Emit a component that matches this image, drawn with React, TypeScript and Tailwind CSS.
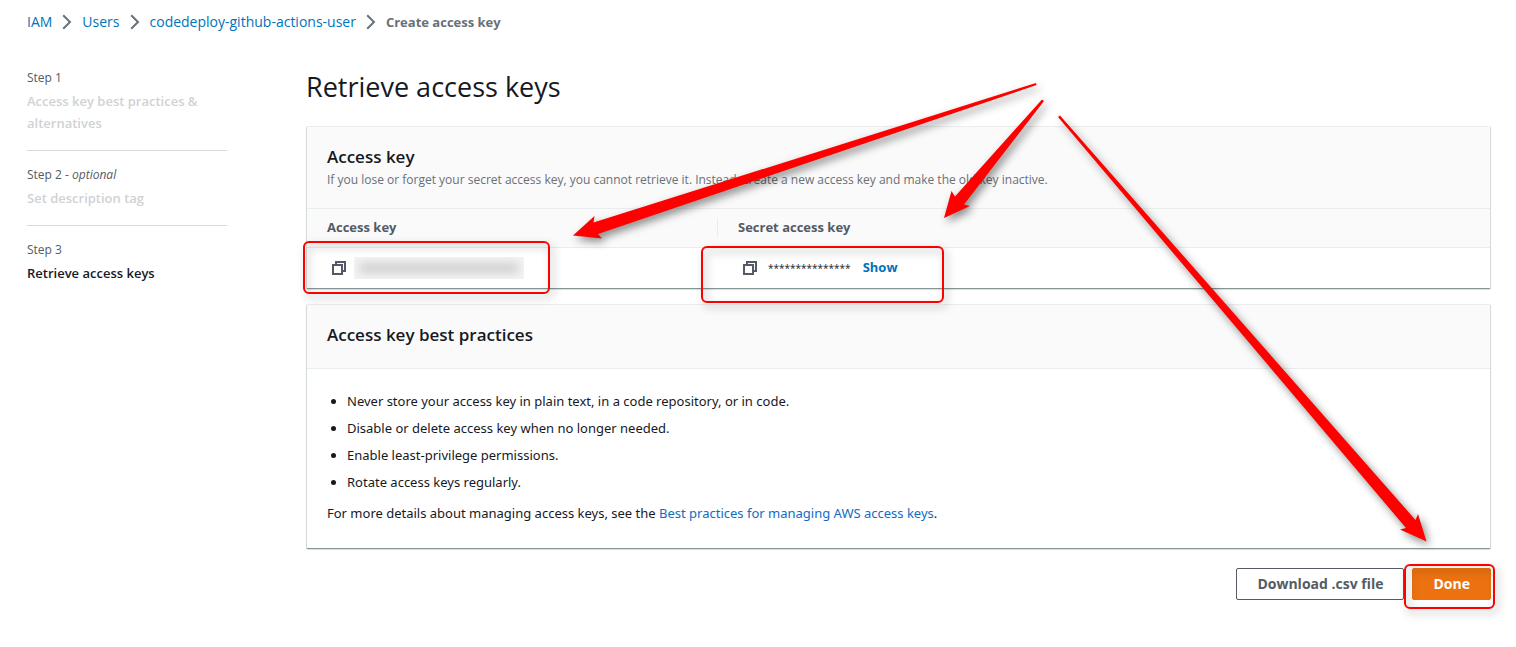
import React from "react";

const font = "font-['Open_Sans','Noto_Sans',sans-serif]";

function Chevron() {
  return (
    <svg aria-hidden="true" width="10" height="16" viewBox="0 0 10 16" fill="none" stroke="#687078" strokeWidth="2" className="shrink-0">
      <path d="M1.2 1.2 8 8 1.2 14.8" />
    </svg>
  );
}

function CopyIcon() {
  return (
    <svg aria-hidden="true" width="14" height="14" viewBox="0 0 14 14" fill="none" stroke="#545b64" strokeWidth="2">
      <path d="M1 4h9v9H1z" />
      <path d="M4 4V1h9v9h-3" />
    </svg>
  );
}

function Highlight({ className }: { className: string }) {
  return (
    <div
      className={`pointer-events-none absolute z-10 rounded-md border-2 border-[#ff0000] drop-shadow-[3px_4px_4px_rgba(0,0,0,0.35)] ${className}`}
    />
  );
}

function Arrows() {
  return (
    <svg
      aria-hidden="true"
      width="1516"
      height="647"
      viewBox="0 0 1516 647"
      className="pointer-events-none absolute top-0 left-0 z-20 drop-shadow-[3px_4px_4px_rgba(0,0,0,0.45)]"
      fill="#ff0000"
    >
      <path d="M1036 83 1036.500 85 598 234 602 238.500 573 235.500 594.500 216 593.500 222.500Z" />
      <path d="M1042 99.500 1044 101 964 204.500 970 206 944 218 951.500 191 955 196.500Z" />
      <path d="M1058 117 1060 115.500 1415.500 520 1418 514 1426.500 541.500 1400 529.500 1406 528Z" />
    </svg>
  );
}

const steps = [
  { label: "Step 1", optional: false, title: "Access key best practices & alternatives" },
  { label: "Step 2", optional: true, title: "Set description tag" },
  { label: "Step 3", optional: false, title: "Retrieve access keys" },
];

const practices = [
  "Never store your access key in plain text, in a code repository, or in code.",
  "Disable or delete access key when no longer needed.",
  "Enable least-privilege permissions.",
  "Rotate access keys regularly.",
];

const card =
  "rounded-xs border border-[#d5dbdb] border-t-[#eaeded] border-b-[#879596] bg-white shadow-[0_1px_1px_rgba(0,28,36,0.15)]";

export default function App() {
  return (
    <div className={`relative min-h-screen overflow-hidden bg-white pr-[25px] pl-[27px] text-sm text-[#16191f] ${font}`}>
      <nav aria-label="Breadcrumb" className="pt-3">
        <ol className="flex items-center gap-2.5 leading-5 text-[#0073bb]">
          <li className="flex items-center gap-2.5"><a href="#iam">IAM</a><Chevron /></li>
          <li className="flex items-center gap-2.5"><a href="#users">Users</a><Chevron /></li>
          <li className="flex items-center gap-2.5"><a href="#user">codedeploy-github-actions-user</a><Chevron /></li>
          <li className="text-[13px] font-bold text-[#687078]" aria-current="page">Create access key</li>
        </ol>
      </nav>

      <div className="flex items-start gap-[79px] pt-9">
        <ol className="w-[200px] shrink-0 divide-y divide-[#d5dbdb]">
          {steps.map((s, i) => (
            <li key={s.label} className="pb-4 not-first:pt-3.5">
              <div className="text-xs leading-5 text-[#545b64]">
                {s.label}
                {s.optional && <> - <i>optional</i></>}
              </div>
              <div className={`pt-0.5 text-[13px] leading-[22px] font-semibold ${i === 2 ? "text-[#16191f]" : "text-[#d0d2d4]"}`}>
                {s.title}
              </div>
            </li>
          ))}
        </ol>

        <main className="min-w-0 flex-1">
          <h1 className="pt-px text-[27px] leading-9">Retrieve access keys</h1>

          <section className={`mt-[21px] ${card}`}>
            <header className="border-b border-[#eaeded] bg-[#fafafa] px-5 pt-[19px] pb-[18px]">
              <h2 className="text-[17px] leading-[22px] font-semibold">Access key</h2>
              <p className="pt-0.5 text-xs leading-5 text-[#687078]">
                If you lose or forget your secret access key, you cannot retrieve it. Instead, create a new access key and make the old key inactive.
              </p>
            </header>
            <table className="w-full table-fixed border-collapse text-left">
              <thead className="bg-[#fafafa] text-[13px] text-[#545b64]">
                <tr className="h-[38px] border-b border-[#eaeded]">
                  <th scope="col" className="w-[411px] p-0 font-bold">
                    <div className="border-r border-[#eaeded] pl-5">Access key</div>
                  </th>
                  <th scope="col" className="p-0 pl-5 font-bold">Secret access key</th>
                </tr>
              </thead>
              <tbody>
                <tr className="h-[41px]">
                  <td className="relative p-0 pl-[25px]">
                    <div className="flex items-center gap-2">
                      <button type="button" aria-label="Copy access key"><CopyIcon /></button>
                      <div className="h-[22px] w-[170px] overflow-hidden bg-[#f5f5f5] p-[5px]">
                        <div className="h-3 w-40 bg-[#d3d3d3] blur-[5px]" />
                      </div>
                    </div>
                    <Highlight className="-top-[7px] -left-1 h-[53px] w-[247px]" />
                  </td>
                  <td className="relative p-0 pl-[25px]">
                    <div className="flex items-center">
                      <button type="button" aria-label="Copy secret access key"><CopyIcon /></button>
                      <span className="pl-[11px] text-[10px] text-[#16191f]">***************</span>
                      <button type="button" className="pl-3 text-[13px] font-bold text-[#0073bb]">Show</button>
                    </div>
                    <Highlight className="-top-0.5 -left-[17px] h-[57px] w-[243px]" />
                  </td>
                </tr>
              </tbody>
            </table>
          </section>

          <section className={`mt-[15px] ${card}`}>
            <header className="border-b border-[#eaeded] bg-[#fafafa] px-5 pt-[18px] pb-[22px]">
              <h2 className="text-[17px] leading-[23px] font-semibold">Access key best practices</h2>
            </header>
            <div className="px-5 pt-[19px] pb-6 font-['Noto_Sans','Open_Sans',sans-serif] text-[13px]">
              <ul className="list-disc pl-5 leading-[27px]">
                {practices.map((p) => <li key={p}>{p}</li>)}
              </ul>
              <p className="pt-1.5 leading-[22px]">
                For more details about managing access keys, see the{" "}
                <a href="#best-practices" className="text-[#126cc4]">Best practices for managing AWS access keys</a>.
              </p>
            </div>
          </section>

          <div className="flex justify-end gap-2 pt-[19px]">
            <button type="button" className="h-8 rounded-xs border border-[#545b64] px-5 font-bold text-[#545b64]">
              Download .csv file
            </button>
            <div className="relative">
              <button type="button" className="h-8 rounded-xs border border-[#ec7211] bg-[#ec7211] px-5 font-bold text-white">Done</button>
              <Highlight className="-top-1 -right-1 h-[45px] w-[91px]" />
            </div>
          </div>
        </main>
      </div>
      <Arrows />
    </div>
  );
}
